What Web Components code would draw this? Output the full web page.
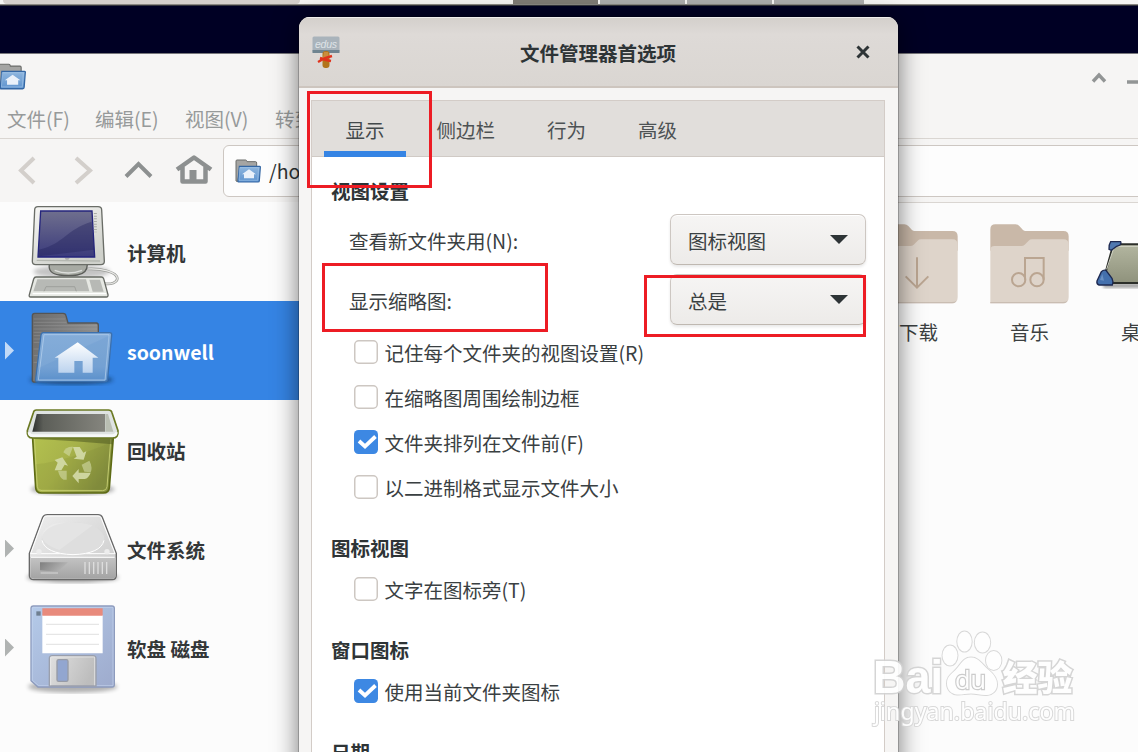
<!DOCTYPE html>
<html lang="zh-CN">
<head>
<meta charset="utf-8">
<title>文件管理器首选项</title>
<style>
  body {
    margin: 0;
    overflow: hidden;
    font-family: "Noto Sans CJK SC", sans-serif;
    font-size: 19.5px;
    line-height: 28px;
    color: #2e3436;
  }
</style>
</head>
<body>
<desk-top>
  <task-bar></task-bar>
  <file-window>
    <menu-item slot="menu" style="width: 88px">文件(F)</menu-item>
    <menu-item slot="menu" style="width: 90px">编辑(E)</menu-item>
    <menu-item slot="menu" style="width: 90px">视图(V)</menu-item>
    <menu-item slot="menu">转到</menu-item>
    <place-row slot="places" icon="computer">计算机</place-row>
    <place-row slot="places" icon="home" expandable selected>soonwell</place-row>
    <place-row slot="places" icon="trash">回收站</place-row>
    <place-row slot="places" icon="drive" expandable>文件系统</place-row>
    <place-row slot="places" icon="floppy" expandable>软盘 磁盘</place-row>
    <folder-item icon="download">下载</folder-item>
    <folder-item icon="music">音乐</folder-item>
    <folder-item icon="desktop">桌面</folder-item>
  </file-window>
  <prefs-dialog slot="over" heading="文件管理器首选项">
    <prefs-tab slot="tabs" active>显示</prefs-tab>
    <prefs-tab slot="tabs">侧边栏</prefs-tab>
    <prefs-tab slot="tabs">行为</prefs-tab>
    <prefs-tab slot="tabs">高级</prefs-tab>
    <prefs-group heading="视图设置">
      <combo-row label="查看新文件夹用(N):">图标视图</combo-row>
      <combo-row label="显示缩略图:">总是</combo-row>
      <check-row>记住每个文件夹的视图设置(R)</check-row>
      <check-row>在缩略图周围绘制边框</check-row>
      <check-row checked>文件夹排列在文件前(F)</check-row>
      <check-row>以二进制格式显示文件大小</check-row>
    </prefs-group>
    <prefs-group heading="图标视图">
      <check-row>文字在图标旁(T)</check-row>
    </prefs-group>
    <prefs-group heading="窗口图标">
      <check-row checked>使用当前文件夹图标</check-row>
    </prefs-group>
    <prefs-group heading="日期"></prefs-group>
  </prefs-dialog>
  <mark-box slot="over" style="left: 307px; top: 91px; width: 125px; height: 97px"></mark-box>
  <mark-box slot="over" style="left: 322px; top: 263px; width: 226px; height: 69px"></mark-box>
  <mark-box slot="over" style="left: 644px; top: 275px; width: 222px; height: 62px"></mark-box>
  <water-mark slot="over"></water-mark>
</desk-top>

<script>
class BaseElement extends HTMLElement {
  connectedCallback() {
    const root = this.attachShadow({ mode: 'open' });
    root.innerHTML = `<style>${this.styles()}</style>${this.markup()}`;
  }

  styles() { return ''; }

  markup() { return '<slot></slot>'; }
}

const smallHome = (w, h) => `
  <svg width="${w}" height="${h}" viewBox="0 0 78 72">
    <defs><linearGradient id="sh" x2="0" y2="1"><stop stop-color="#8fb6de"/><stop offset="1" stop-color="#5f94cf"/></linearGradient></defs>
    <path d="M3 66V6q0-3 3-3h26q3 0 4 5h26q3 0 3 4v14H16L8 68z" fill="#a5a5a3" stroke="#6b6c6a" stroke-width="3"/>
    <path d="M13 22h61q3 0 2 4l-3 39q0 4-4 4H12q-4 0-3-4z" fill="url(#sh)" stroke="#3467a4" stroke-width="3.5"/>
    <path d="M14 26h57l-3 38H12z" fill="none" stroke="#a9c9ea" stroke-width="1.5"/>
    <path d="M42 31 63 46h-6v12H27V46h-6z" fill="#eaf1fa"/>
  </svg>`;

const placeIcons = {
  computer: `
    <svg viewBox="72 21 294 297">
      <defs>
        <linearGradient id="a" x2="0" y2="1"><stop stop-color="#6f6f8e"/><stop offset="1" stop-color="#3b3b7c"/></linearGradient>
        <linearGradient id="b" x2=".6" y2="1"><stop stop-color="#f7f7f5"/><stop offset="1" stop-color="#cfd1cb"/></linearGradient>
        <filter id="f"><feGaussianBlur stdDeviation="7"/></filter>
      </defs>
      <ellipse cx="215" cy="230" rx="115" ry="20" fill="#000" opacity=".22" filter="url(#f)"/>
      <path d="M262 222c40-2 88 8 90 28 0 13-18 19-40 16" fill="none" stroke="#9a9c98" stroke-width="8"/>
      <path d="M262 222c40-2 88 8 90 28 0 13-18 19-40 16" fill="none" stroke="#e8e8e6" stroke-width="3.5"/>
      <path d="M148 208q-4 28 30 32 28 4 54 0 30-4 30-32z" fill="#a7aaa3" stroke="#5b5d59" stroke-width="4"/>
      <path d="M164 226q40 16 82 0" fill="none" stroke="#dcdedb" stroke-width="4"/>
      <path d="M114 35h180q11 0 11 10l8 154q0 10-10 10H107q-10 0-10-10l7-154q0-10 10-10z" fill="url(#b)" stroke="#6a6d67" stroke-width="4"/>
      <path d="M110 196 300 198" stroke="#b4b7b0" stroke-width="4"/>
      <path d="M194 188h16l-5 6h-8z" fill="#aaa"/>
      <path d="M122 48h154l8 138H114z" fill="url(#a)" stroke="#25257c" stroke-width="4"/>
      <path d="M275 80c-78 24-82 66-158 84l-1 20 166-20z" fill="#22225c" opacity=".4"/>
      <path d="M286 54v58" stroke="#aaada6" stroke-width="9" stroke-dasharray="3 5"/>
      <path d="M108 246h196q5 0 7 5l13 48q1 7-5 7H92q-6 0-4-7l13-47q2-6 7-6z" fill="#e6e8e3" stroke="#666963" stroke-width="4"/>
      <path d="M112 253h146l10 36H100z" fill="#b7b9b5"/>
      <path d="M268 254h32l11 36h-33z" fill="#b7b9b5"/>
      <path d="M132 289l6-14h86l5 14" fill="none" stroke="#92948f" stroke-width="2"/>
      <path d="M98 296h220" stroke="#fff" stroke-width="4"/>
    </svg>`,
  home: `
    <svg viewBox="72 318 294 297">
      <defs>
        <linearGradient id="a" x2="1" y2=".3"><stop stop-color="#6b6b6b"/><stop offset="1" stop-color="#8f8f8f"/></linearGradient>
        <linearGradient id="b" x2="0" y2="1"><stop stop-color="#85add9"/><stop offset=".7" stop-color="#7ba6d5"/><stop offset="1" stop-color="#5c91cd"/></linearGradient>
        <linearGradient id="c" x2="0" y2="1"><stop stop-color="#fff"/><stop offset="1" stop-color="#bcd3ee"/></linearGradient>
        <filter id="f"><feGaussianBlur stdDeviation="6"/></filter>
      </defs>
      <ellipse cx="214" cy="554" rx="125" ry="14" fill="#123" opacity=".6" filter="url(#f)"/>
      <path d="M97 556V362q0-7 7-7h85q8 0 9 7l6 22h85q6 0 6 7v60L110 560q-12 4-13-4z" fill="url(#a)" stroke="#555" stroke-width="4"/>
      <path d="M101 372h94M101 382h98M101 392h190M101 402h190M101 412h24M101 422h22M101 432h22M101 442h20M101 462h18M101 482h16M101 502h14" stroke="#b0b0b0" stroke-width="2" opacity=".45"/>
      <path d="M130 413h199q7 0 6 7l-12 132q-1 8-8 8H112q-7 0-5-8l16-132q1-7 7-7z" fill="url(#b)" stroke="#3c70ad" stroke-width="4"/>
      <path d="M132 419h195l-12 136H115z" fill="none" stroke="#a8c7e8" stroke-width="3"/>
      <path d="M328 422 117 518l-4 36h202z" fill="#4b86c8" opacity=".14"/>
      <path d="M233 442l62 46h-17v45h-30v-35h-25v35h-48v-45h-11z" fill="url(#c)"/>
    </svg>`,
  trash: `
    <svg viewBox="72 0 294 297">
      <defs>
        <linearGradient id="a" x2="1" y2=".5"><stop stop-color="#b4c24f"/><stop offset=".5" stop-color="#a7b24a"/><stop offset="1" stop-color="#838e3e"/></linearGradient>
        <linearGradient id="b" x2="1"><stop stop-color="#2e3130"/><stop offset=".15" stop-color="#5c5e58"/><stop offset="1" stop-color="#85857e"/></linearGradient>
        <filter id="f"><feGaussianBlur stdDeviation="6"/></filter>
      </defs>
      <ellipse cx="218" cy="268" rx="126" ry="16" fill="#000" opacity=".35" filter="url(#f)"/>
      <path d="M97 100h244l-13 162q-1 17-18 17H124q-16 0-17-17z" fill="url(#a)" stroke="#5e6b15" stroke-width="5"/>
      <path d="M103 110l9 150q1 12 14 12h182q12 0 13-12l12-150" fill="none" stroke="#c5ce70" stroke-width="3"/>
      <path d="M101 113h238l-2 20q-110-10-234-16z" fill="#4e5920" opacity=".55"/>
      <path d="M108 193Q210 180 330 128l-10 140H114z" fill="#6e7a2c" opacity=".14"/>
      <path d="M109 30h216q9 0 11 8l18 54q2 22-16 22H98q-18 0-16-22l18-54q2-8 9-8z" fill="#dfe3e2" stroke="#6b7923" stroke-width="5"/>
      <path d="M110 42h205v53H97z" fill="url(#b)"/>
      <path d="M316 42h8l16 53h-24z" fill="#b9beb2"/>
      <path d="M87 97q0 10 12 10h238q12 0 12-10" fill="none" stroke="#f6f8f8" stroke-width="8"/>
      <g fill="#d5dcaa" opacity=".9">
        <path d="M219 141h20l11 17 9-4-8 25-30-3 9-6z"/>
        <path d="M164 180l23-8 17 25-10-3-10 17h-20l9-23z"/>
        <path d="M217 228l19-21v11h36q-7 18-18 19h-18v13z"/>
        <g opacity=".65"><path d="M190 157q6-18 29-17l-11 29z"/><path d="M245 194l23-12q11 18 4 35l-19-2z"/><path d="M174 212h26v27h-9q-12-5-17-27z"/></g>
      </g>
    </svg>`,
  drive: `
    <svg viewBox="72 297 294 297">
      <defs>
        <linearGradient id="a" x2="1" y2="1"><stop stop-color="#efefef"/><stop offset="1" stop-color="#c9c9c9"/></linearGradient>
        <linearGradient id="b" x2="0" y2="1"><stop stop-color="#c3c3c3"/><stop offset="1" stop-color="#a3a3a3"/></linearGradient>
        <linearGradient id="c" x2="1" y2=".3"><stop stop-color="#7e7e7e"/><stop offset="1" stop-color="#b6b6b6"/></linearGradient>
        <filter id="f"><feGaussianBlur stdDeviation="6"/></filter>
      </defs>
      <ellipse cx="218" cy="532" rx="138" ry="15" fill="#000" opacity=".4" filter="url(#f)"/>
      <path d="M142 344h152q10 0 13 8l42 108v66q0 13-12 13H101q-13 0-13-13v-66l40-108q4-8 14-8z" fill="url(#a)" stroke="#686868" stroke-width="4"/>
      <path d="M91 472h256v54q0 10-10 10H101q-10 0-10-10z" fill="url(#b)"/>
      <path d="M132 352q3-4 10-4h152q7 0 9 5l42 108H92z" fill="none" stroke="#fff" stroke-width="3"/>
      <path d="M93 472h251" stroke="#f5f5f5" stroke-width="4"/>
      <ellipse cx="219" cy="416" rx="94" ry="49" fill="#dedede"/>
      <path d="M160 372q60-12 118 4L178 450q-50-18-53-42 6-24 35-36z" fill="#fff" opacity=".2"/>
      <path d="M126 421q10 40 93 43 84-3 93-43" fill="none" stroke="#fff" stroke-width="3"/>
      <circle cx="117" cy="455" r="8" fill="#ededed"/><circle cx="321" cy="455" r="8" fill="#ededed"/>
      <path d="M120 487h84l-30 28-54-4z" fill="url(#c)"/>
      <path d="M122 519h52" stroke="#d5d5d5" stroke-width="3"/>
      <path d="M255 486v36M268 486v36M281 486v36M294 486v36M307 486v36M320 486v36" stroke="#ddd" stroke-width="4"/>
    </svg>`,
  floppy: `
    <svg viewBox="72 594 294 297">
      <defs>
        <linearGradient id="a" x2="1" y2="1"><stop stop-color="#b4cae9"/><stop offset="1" stop-color="#9eabcd"/></linearGradient>
        <linearGradient id="b" x2="1" y2=".3"><stop stop-color="#e0e0e0"/><stop offset="1" stop-color="#bdbdbd"/></linearGradient>
        <filter id="f"><feGaussianBlur stdDeviation="7"/></filter>
      </defs>
      <ellipse cx="218" cy="860" rx="134" ry="18" fill="#000" opacity=".3" filter="url(#f)"/>
      <path d="M100 618h236q7 0 7 7v229q0 7-7 7H114l-21-19V625q0-7 7-7z" fill="url(#a)" stroke="#8d9bbd" stroke-width="4"/>
      <path d="M97 841V622h242v235H116z" fill="none" stroke="#c6d5ef" stroke-width="2"/>
      <path d="M109 634h13v13h-13z" fill="#6f7f90"/>
      <path d="M127 645h181v115H127z" fill="#fff"/>
      <path d="M127 625h181v22H127z" fill="#e88a7c"/>
      <path d="M138 673h159M138 703h159M138 733h159" stroke="#e6e6e6" stroke-width="4"/>
      <path d="M148 858v-82q0-9 9-9h122q9 0 9 9v82z" fill="url(#b)" stroke="#9a9fac" stroke-width="4"/>
      <path d="M152 856v-85h132v85" fill="none" stroke="#eee" stroke-width="2"/>
      <rect x="171" y="779" width="33" height="65" rx="5" fill="#92a6d0" stroke="#979ba6" stroke-width="4"/>
    </svg>`,
};

const folderShape = `
  <path d="M301 752v-64q0-15 15-15h60q7 0 12 5l11 12q3 3 8 3h113q16 0 16 16v43z" fill="#c9b8a8"/>
  <path d="M301 910V750q0-12 12-12h81q6 0 10-4l12-12q4-4 10-4h94q16 0 16 16v158q0 18-18 18z" fill="#ded4ca"/>
  <path d="M301 906h217q10 0 14-4-3 8-14 8H301z" fill="#c9bdb2"/>`;

const folderIcons = {
  download: `${folderShape}<path d="M414 772v90M380 829l34 34 34-34" fill="none" stroke="#baa591" stroke-width="6"/>`,
  music: `${folderShape}<g fill="none" stroke="#baa591" stroke-width="6"><circle cx="386" cy="839" r="20"/><circle cx="441" cy="839" r="20"/><path d="M405 839v-65h56v65"/></g>`,
  desktop: `
    <defs>
      <linearGradient id="a" x2="0" y2="1"><stop stop-color="#b3b6a0"/><stop offset="1" stop-color="#8f927c"/></linearGradient>
      <filter id="f"><feGaussianBlur stdDeviation="5"/></filter>
    </defs>
    <g transform="translate(-333 0)">
      <path d="M640 850h220v14H640z" opacity=".35" filter="url(#f)"/>
      <path d="M670 733h150l45 116H638z" fill="url(#a)" stroke="#2c2f2a" stroke-width="6"/>
      <path d="M674 739h148M672 742l-22 66" fill="none" stroke="#d4d6c8" stroke-width="3"/>
      <path d="M662 725h30q3 4-2 10l-10 4-16 12-7-3q-1-14 5-23z" fill="#4f78b0" stroke="#1d2850" stroke-width="4"/>
      <path d="M634 815q6-6 14-4l18 24q5 10 1 20h-40q-8-2-6-12z" fill="#4470ad" stroke="#1d2850" stroke-width="4"/>
      <path d="M637 822l-7 18 12 2z" fill="#8fb0d8" opacity=".5"/>
    </g>`,
};

class DeskTop extends BaseElement {
  styles() {
    return `
      :host { display: flex; flex-direction: column; position: relative; width: 1138px; height: 752px;
        overflow: hidden; background: #000024; }
      slot:not([name]) { display: contents; }`;
  }

  markup() { return '<slot></slot><slot name="over"></slot>'; }
}

class TaskBar extends BaseElement {
  styles() {
    return `
      :host { display: flex; height: 5px; margin-bottom: 49px; flex: none; box-sizing: border-box; gap: 2px;
        background: #f6f5f3; border-bottom: 1px solid #8b8883; box-shadow: 0 1px #33333c; }
      i { width: 85px; background: #adadad; }
      .wide { width: 297px; margin: 0 211px 0 3px; background: #d5d0cc; border-radius: 0 0 4px 4px; }
      .on { background: #7f7b75; }`;
  }

  markup() { return '<i class="wide"></i><i class="on"></i><i></i><i></i><i style="width: 90px"></i>'; }
}

class FileWindow extends BaseElement {
  styles() {
    return `
      :host { display: flex; flex-direction: column; flex: 1; min-height: 0; background: #f6f5f4;
        box-shadow: 0 -1px #77777b; }
      header { display: flex; height: 44px; align-items: center; justify-content: space-between; flex: none; }
      header svg, .path svg { display: block; }
      .menu { display: flex; height: 40px; padding-left: 7px; flex: none; border-bottom: 1px solid #dad6d2; }
      .tools { display: flex; align-items: center; height: 63px; flex: none; }
      .nav { display: block; width: 220px; height: 62px; flex: none; margin-top: -1px; }
      .path { display: flex; align-items: center; gap: 8px; flex: 1; height: 50px; margin: 1px -10px 0 3px; padding-left: 11px;
        border: 1px solid #cdc7c2; border-radius: 6px; background: #fdfdfd; }
      .body { display: flex; flex: 1; background: #fcfcfc; }
      .places { width: 300px; flex: none; }
      .files { display: flex; align-items: flex-start; padding-left: 563px; border-top: 1px solid #dad6d2; }`;
  }

  markup() {
    return `
      <header>
        <span style="margin-left: -3px">${smallHome(29, 29)}</span>
        <svg width="50" height="44" fill="none" stroke="#929595" stroke-width="3.4"><path d="M5 27.500l6-6.500 6 6.500M39 28h14"/></svg>
      </header>
      <div class="menu"><slot name="menu"></slot></div>
      <div class="tools">
        <svg class="nav" viewBox="0 139 220 62" fill="none" stroke-width="4">
          <path d="M34 158 21 170.500 34 183M76 158l14 12.500L76 183" stroke="#d3cfcb"/>
          <path d="M126 176.500l12.500-12.500 12.500 12.500" stroke="#8d9090"/>
          <path d="M177 169.500l17-12 17 12M182.500 167v14.500h23V167" stroke="#8d9090" stroke-width="4.500" stroke-linejoin="round"/>
          <path d="M189.500 183v-13h7v13" fill="#8d9090" stroke="none"/>
        </svg>
        <div class="path">${smallHome(26, 24)}<span>/ho</span></div>
      </div>
      <div class="body">
        <div class="places"><slot name="places"></slot></div>
        <div class="files"><slot></slot></div>
      </div>`;
  }
}

class MenuItem extends BaseElement {
  styles() { return ':host { display: block; flex: none; line-height: 42px; color: #979a9a; white-space: nowrap; }'; }
}

class PlaceRow extends BaseElement {
  styles() {
    return `
      :host { display: flex; align-items: center; height: 99px; font-weight: bold; color: #333738; --arrow: #b0b3b2; }
      :host([selected]) { background: #3584e4; color: #fff; --arrow: #c2daf7; }
      i { width: 9px; height: 18px; margin: 0 10px 0 5px; flex: none; }
      :host([expandable]) i { background: var(--arrow); clip-path: polygon(0 0, 100% 50%, 0 100%); }
      svg { display: block; width: 98px; height: 99px; flex: none; }
      span { padding-left: 5px; margin-top: 3px; }`;
  }

  markup() { return `<i></i>${placeIcons[this.getAttribute('icon')]}<span><slot></slot></span>`; }
}

class FolderItem extends BaseElement {
  styles() {
    return `
      :host { display: block; width: 111px; flex: none; text-align: center; color: #3b3f40; }
      svg { display: block; width: 111px; height: 110px; margin-top: -1px; }
      span { display: block; line-height: 39px; }`;
  }

  markup() {
    return `<svg viewBox="252 606 333 330">${folderIcons[this.getAttribute('icon')]}</svg><span><slot></slot></span>`;
  }
}

class PrefsDialog extends BaseElement {
  styles() {
    return `
      :host { display: flex; flex-direction: column; position: absolute; left: 299px; top: 17px; width: 599px; height: 760px;
        box-sizing: border-box; border-radius: 11px 11px 0 0; background: #f6f5f4; overflow: hidden;
        box-shadow: 0 0 0 1px rgba(0,0,0,.2), 0 4px 26px rgba(0,0,0,.55); }
      header { display: grid; grid-template-columns: 60px 1fr 60px; align-items: center; height: 71px; flex: none;
        box-sizing: border-box; background: linear-gradient(#d3cfcb, #dedad7 25%, #dad6d2); border-bottom: 2px solid #cdc5be;
        box-shadow: inset 0 1px #efedec; text-align: center; }
      header svg { display: block; margin-left: -1px; }
      h1 { margin: 2px 1px 0 0; font-size: inherit; font-weight: bold; }
      .book { display: flex; flex-direction: column; flex: 1; margin: 12px 13px 0 12px; border: 1px solid #d3ccc7; background: #fff; }
      nav { display: flex; gap: 9px; height: 55px; padding-left: 12px; background: #e1dedb; border-bottom: 1px solid #d0cac5; flex: none; }
      .page { padding: 12px 18px 0 19px; }`;
  }

  markup() {
    return `
      <header>
        <svg width="60" height="69">
          <rect x="14.500" y="19.500" width="27" height="16" rx="1.500" fill="#a9b3bb"/>
          <path d="M14.500 33h27v3h-27z" fill="#6f8490"/>
          <text x="17" y="30.500" font-family="Liberation Sans" font-size="10.500" font-style="italic" fill="#dfe3e7" textLength="22">edus</text>
          <rect x="24.500" y="34" width="7" height="17" rx="3" fill="#b2741b"/>
          <path d="M26 35h4l1 6h-6z" fill="#c98d3d"/>
          <path d="M20 45l7-4 7-2M22 41l6 2 5 1" fill="none" stroke="#e0331c" stroke-width="2.400"/>
        </svg>
        <h1>${this.getAttribute('heading')}</h1>
        <svg width="60" height="69"><path d="M20.500 29.500l11 11M31.500 29.500l-11 11" stroke="#2e3436" stroke-width="3"/></svg>
      </header>
      <div class="book">
        <nav><slot name="tabs"></slot></nav>
        <div class="page"><slot></slot></div>
      </div>`;
  }
}

class PrefsTab extends BaseElement {
  styles() {
    return `
      :host { display: block; padding: 0 21.500px; line-height: 57px; height: 56px; box-sizing: border-box; color: #4d5254; }
      :host([active]) { box-shadow: inset 0 -6px #3584e4; color: #43494b; }`;
  }
}

class PrefsGroup extends BaseElement {
  styles() {
    return `
      :host { display: block; margin-bottom: 17px; }
      h2 { margin: 0; height: 40px; line-height: 43px; font-size: inherit; font-weight: bold; }
      .rows { padding-left: 18px; }`;
  }

  markup() { return `<h2>${this.getAttribute('heading')}</h2><div class="rows"><slot></slot></div>`; }
}

class ComboRow extends BaseElement {
  styles() {
    return `
      :host { display: flex; align-items: center; justify-content: space-between; height: 60px; color: #3a4042; }
      span { padding-top: 3px; }
      .box { display: flex; align-items: center; justify-content: space-between; width: 196px; height: 51px; box-sizing: border-box;
        padding: 0 17px; border: 1px solid #cdc7c2; border-bottom-color: #bfb8b1; border-radius: 7px;
        background: linear-gradient(#f6f5f4, #edebe9); box-shadow: inset 0 1px #fff, 0 2px 3px rgba(0,0,0,.09); }
      i { border: solid transparent; border-width: 9px 9px 0; border-top-color: #2e3436; }`;
  }

  markup() {
    return `<span>${this.getAttribute('label')}</span><div class="box"><span><slot></slot></span><i></i></div>`;
  }
}

class CheckRow extends BaseElement {
  styles() {
    return `
      :host { display: flex; align-items: center; height: 45px; padding-left: 5px; gap: 7px; color: #3a4042; }
      svg { display: block; width: 24px; height: 24px; flex: none; margin: 0 0 0 -.5px; }
      span { white-space: nowrap; padding-top: 3.500px; }`;
  }

  markup() {
    const box = this.hasAttribute('checked')
      ? '<rect width="24" height="24" rx="4.500" fill="#3d88e3"/><path d="M5 11l6 5.500 10.500-10" fill="none" stroke="#fff" stroke-width="3.800"/>'
      : '<rect x=".75" y=".75" width="22.500" height="22.500" rx="4" fill="#fff" stroke="#cdc7c2" stroke-width="1.500"/>';
    return `<svg>${box}</svg><span><slot></slot></span>`;
  }
}

class MarkBox extends BaseElement {
  styles() { return ':host { display: block; position: absolute; box-sizing: border-box; border: 3px solid #ed1c24; }'; }

  markup() { return ''; }
}

class WaterMark extends BaseElement {
  styles() {
    return `
      :host { display: block; position: absolute; left: 860px; top: 620px; }
      svg { display: block; }
      text, .paw { fill: #fff; stroke: #d6d6d6; stroke-width: 2px; paint-order: stroke; }
      .edge { stroke: #d2d2d2; stroke-width: 3px; }`;
  }

  markup() {
    return `
      <svg width="278" height="132" opacity=".92">
        <text class="edge" x="13" y="73" font-family="Liberation Sans" font-weight="bold" font-size="46" textLength="70" lengthAdjust="spacingAndGlyphs">Bai</text>
        <g class="paw">
          <ellipse cx="90" cy="35.500" rx="7.500" ry="10"/>
          <ellipse cx="104.500" cy="21.500" rx="7.200" ry="10"/>
          <ellipse cx="122.500" cy="22.500" rx="7.700" ry="10"/>
          <ellipse cx="133.700" cy="40.500" rx="7.700" ry="9.500"/>
          <path d="M111 37.500c8 0 11 7 17 12s9 9 9 15-4 10-10 10.500-10-1.500-16-1.500-9 1.500-14 1-10-4-10-11 4-9 9-14 7-12 15-12z"/>
        </g>
        <text x="95" y="68.500" font-family="Open Sans" font-size="26" textLength="31" lengthAdjust="spacingAndGlyphs" style="stroke: #c9c9c9; stroke-width: 2.500px">du</text>
        <text class="edge" x="142.500" y="71" font-weight="900" font-size="35" textLength="70">经验</text>
        <text x="14" y="100" font-family="Noto Sans" font-size="23" textLength="201">jingyan.baidu.com</text>
      </svg>`;
  }
}

customElements.define('desk-top', DeskTop);
customElements.define('task-bar', TaskBar);
customElements.define('file-window', FileWindow);
customElements.define('menu-item', MenuItem);
customElements.define('place-row', PlaceRow);
customElements.define('folder-item', FolderItem);
customElements.define('prefs-dialog', PrefsDialog);
customElements.define('prefs-tab', PrefsTab);
customElements.define('prefs-group', PrefsGroup);
customElements.define('combo-row', ComboRow);
customElements.define('check-row', CheckRow);
customElements.define('mark-box', MarkBox);
customElements.define('water-mark', WaterMark);
</script>
</body>
</html>
